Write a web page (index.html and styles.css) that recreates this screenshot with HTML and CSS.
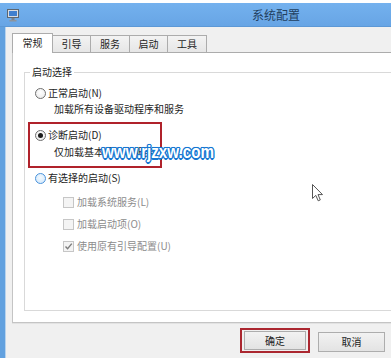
FILE: index.html
```html
<!DOCTYPE html>
<html lang="zh">
<head>
<meta charset="utf-8">
<link rel="stylesheet" href="styles.css">
</head>
<body>
<div class="window">
  <div class="titlebar">
    <svg class="appicon" width="12" height="13" viewBox="0 0 12 13">
      <rect x="0.5" y="0.5" width="11" height="8" fill="#d9dde3" stroke="#5d6670"/>
      <rect x="2" y="2" width="8" height="5" fill="#3f7fcf"/>
      <rect x="4.5" y="9" width="3" height="2" fill="#7a828c"/>
      <rect x="2.5" y="11" width="7" height="1.5" fill="#8c949e"/>
    </svg>
    <div class="title">系统配置</div>
  </div>
  <div class="client">
    <div class="tabs">
      <div class="tab active w41">常规</div>
      <div class="tab w39">引导</div>
      <div class="tab w40">服务</div>
      <div class="tab w39">启动</div>
      <div class="tab w40">工具</div>
    </div>
    <div class="panel">
      <div class="group">
        <div class="legend">启动选择</div>
        <div class="row r1"><span class="radio"></span><span>正常启动(N)</span></div>
        <div class="desc">加载所有设备驱动程序和服务</div>
        <div class="mark">
          <div class="row"><span class="radio checked"></span><span>诊断启动(D)</span></div>
          <div class="desc d2">仅加载基本设备和服务</div>
        </div>
        <div class="row r3"><span class="radio focus"></span><span>有选择的启动(S)</span></div>
        <div class="check c1"><span class="box"></span><span>加载系统服务(L)</span></div>
        <div class="check c2"><span class="box"></span><span>加载启动项(O)</span></div>
        <div class="check c3"><span class="box"><svg width="9" height="9" viewBox="0 0 9 9"><path d="M1.5 4.5 L3.6 6.8 L7.8 1.6" fill="none" stroke="#7d7d7d" stroke-width="1.4"/></svg></span><span>使用原有引导配置(U)</span></div>
      </div>
    </div>
    <div class="buttons">
      <div class="mark-btn"><div class="btn ok">确定</div></div>
      <div class="btn cancel">取消</div>
    </div>
  </div>
  <div class="watermark">www.rjzxw.com</div>
  <svg class="cursor" width="12" height="18" viewBox="0 0 12 18">
    <path d="M0.5 0.5 L0.5 14.5 L3.8 11.4 L6.2 16.8 L8.3 15.9 L6 10.6 L10.5 10.6 Z" fill="#fff" stroke="#555" stroke-width="1" stroke-linejoin="round"/>
  </svg>
</div>
</body>
</html>
```

FILE: styles.css
```css
html, body {
  margin: 0;
  padding: 0;
  background: #ffffff;
  overflow: hidden;
  width: 391px;
  height: 358px;
}
.window {
  position: relative;
  width: 560px;
  height: 358px;
  padding-top: 3px;
  box-sizing: border-box;
  font-family: "Noto Sans CJK SC", "Noto Sans", sans-serif;
  font-size: 10px;
  color: #1e1e1e;
  display: flex;
  flex-direction: column;
}
.titlebar {
  height: 24px;
  background: linear-gradient(#74b1ee, #67a5e5);
  border-bottom: 1px solid #5c98d6;
  display: flex;
  align-items: center;
  box-sizing: border-box;
}
.appicon {
  margin-left: 7px;
  margin-top: 1px;
}
.title {
  margin-left: 233px;
  font-size: 12px;
  color: #22405f;
  line-height: 14px;
}
.client {
  flex: 1;
  background: #f0f0f0;
  border-left: 5px solid #62a1df;
  padding-left: 7px;
  padding-top: 6px;
  box-shadow: inset 1px 0 0 #b7d3ee;
}
.tabs {
  display: flex;
  align-items: flex-end;
  height: 19px;
  position: relative;
  z-index: 1;
}
.tab {
  height: 17px;
  box-sizing: border-box;
  border: 1px solid #acacac;
  border-bottom: none;
  margin-left: -1px;
  background: linear-gradient(#f3f3f3, #e6e6e6);
  text-align: center;
  line-height: 16px;
}
.tab.active {
  margin-left: 0;
  height: 20px;
  margin-bottom: -1px;
  background: #ffffff;
  line-height: 18px;
  position: relative;
  z-index: 2;
}
.w41 { width: 41px; }
.w39 { width: 39px; }
.w40 { width: 40px; }
.panel {
  height: 271px;
  box-sizing: border-box;
  background: #ffffff;
  border: 1px solid #c4c4c4;
  border-top-color: #acacac;
  padding-left: 11px;
  padding-top: 19px;
  box-shadow: 0 1px 0 #e2e2e2;
}
.group {
  height: 239px;
  box-sizing: border-box;
  border: 1px solid #d9d9d9;
  padding-left: 10px;
}
.legend {
  display: table;
  margin-top: -8px;
  margin-left: -5px;
  padding: 0 2px;
  height: 14px;
  line-height: 14px;
  background: #ffffff;
}
.row {
  display: flex;
  align-items: center;
  height: 14px;
  line-height: 14px;
}
.r1 { margin-top: 7px; }
.radio {
  width: 11px;
  height: 11px;
  box-sizing: border-box;
  border: 1px solid #6e6e6e;
  border-radius: 50%;
  background: radial-gradient(circle at 50% 40%, #ffffff, #e8e8e8);
  margin-right: 2px;
  display: flex;
  align-items: center;
  justify-content: center;
}
.radio.checked::after {
  content: "";
  width: 5px;
  height: 5px;
  border-radius: 50%;
  background: #1b1b1b;
}
.radio.focus {
  border-color: #4a93dc;
  background: radial-gradient(circle at 50% 40%, #f2f9ff, #cfe6fa);
}
.desc {
  height: 14px;
  line-height: 14px;
  padding-left: 19px;
  margin-top: 2px;
  white-space: nowrap;
}
.mark {
  width: 134px;
  box-sizing: border-box;
  margin-left: -7px;
  margin-top: 6px;
  border: 2px solid #b0222b;
  padding: 4px 0 7px 5px;
}
.desc.d2 { margin-top: 3px; }
.r3 { margin-top: 3px; }
.check {
  display: flex;
  align-items: center;
  height: 14px;
  line-height: 14px;
  padding-left: 28px;
  color: #8c8c8c;
}
.c1 { margin-top: 10px; }
.c2, .c3 { margin-top: 8px; }
.box {
  width: 11px;
  height: 11px;
  box-sizing: border-box;
  border: 1px solid #c6c6c6;
  background: #f4f4f4;
  margin-right: 3px;
  display: flex;
  align-items: center;
  justify-content: center;
}
.buttons {
  display: flex;
  align-items: center;
  gap: 8px;
  margin-top: 5px;
  padding-left: 228px;
}
.mark-btn {
  width: 70px;
  height: 25px;
  box-sizing: border-box;
  border: 2px solid #ab2730;
  padding: 1px 2px;
}
.btn {
  box-sizing: border-box;
  border: 1px solid #adadad;
  background: linear-gradient(#f2f2f2, #e3e3e3);
  text-align: center;
  color: #222;
}
.btn.ok {
  width: 62px;
  height: 19px;
  line-height: 17px;
}
.btn.cancel {
  width: 67px;
  height: 20px;
  line-height: 18px;
  margin-top: 3px;
}
.watermark {
  position: absolute;
  left: 102px;
  top: 142px;
  font-family: "Liberation Sans", Arial, sans-serif;
  font-weight: bold;
  font-size: 19px;
  line-height: 19px;
  color: #ffffff;
  transform: scaleX(0.8);
  transform-origin: left top;
  white-space: nowrap;
  text-shadow:
    1.5px 0 0 #1677d2, -1.5px 0 0 #1677d2, 0 1.5px 0 #1677d2, 0 -1.5px 0 #1677d2,
    1px 1px 0 #1677d2, -1px -1px 0 #1677d2, 1px -1px 0 #1677d2, -1px 1px 0 #1677d2,
    0 0 2px #1677d2;
}
.cursor {
  position: absolute;
  left: 312px;
  top: 184px;
}
```
